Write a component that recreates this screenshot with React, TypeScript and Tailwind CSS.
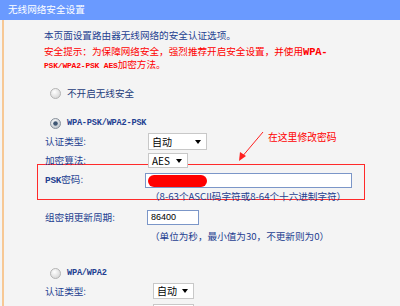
const cjk = { fontFamily: '"Noto Sans CJK SC", "Noto Sans", sans-serif' };

function Radio({ checked }: { checked?: boolean }) {
	return (
		<svg width="11" height="11" viewBox="0 0 11 11" className="shrink-0">
			<defs>
				<radialGradient id={checked ? "rOn" : "rOff"} cx="40%" cy="35%" r="70%">
					<stop offset="0%" stopColor="#ffffff" />
					<stop offset="100%" stopColor={checked ? "#b8c0c8" : "#d4d4d4"} />
				</radialGradient>
			</defs>
			<circle cx="5.5" cy="5.5" r="5" fill={`url(#${checked ? "rOn" : "rOff"})`} stroke={checked ? "#8a929c" : "#b4b4b4"} />
			{checked && <circle cx="5.5" cy="5.5" r="2.3" fill="#3e5673" />}
		</svg>
	);
}

function Select({ value, w, h }: { value: string; w: string; h: string }) {
	return (
		<div className={`relative z-10 flex items-center justify-between bg-white border border-[#c8c8c8] pl-[3px] pr-[5px] ${w} ${h}`}>
			<span className="text-[10px] text-black leading-none">{value}</span>
			<span className="w-0 h-0 border-l-[3px] border-r-[3px] border-t-[4px] border-l-transparent border-r-transparent border-t-black" />
		</div>
	);
}

const Mono = ({ children, size = "text-[8.6px]" }: { children: React.ReactNode; size?: string }) => (
	<span className={`${size} font-bold tracking-[-0.2px]`} style={{ fontFamily: '"Liberation Mono", monospace' }}>
		{children}
	</span>
);

export default function App() {
	return (
		<div className="w-[400px] h-[306px] bg-[#f4f4f4] overflow-hidden" style={cjk}>
			<div className="h-[20px] bg-[#6a9aff] flex items-center pl-[8px]">
				<span className="text-white text-[9.6px] leading-none">无线网络安全设置</span>
			</div>

			<div className="relative ml-[2px] h-[286px] border-l-2 border-[#f7c895] pl-[40px] text-[9.6px] text-[#1e3f91]">
				<div className="pt-[9px] leading-[12px]">本页面设置路由器无线网络的安全认证选项。</div>
				<div className="mt-[4px] leading-[12px] text-[#ff0000]">
					<div>安全提示：为保障网络安全，强烈推荐开启安全设置，并使用<Mono size="text-[10.5px]">WPA-</Mono></div>
					<div><Mono size="text-[8px]">PSK/WPA2-PSK AES</Mono>加密方法。</div>
				</div>

				<div className="mt-[15px] h-[12px] flex items-center pl-[6px] gap-[6px]">
					<Radio />
					<span className="text-[#233b7a]">不开启无线安全</span>
				</div>

				<div className="mt-[18px] h-[12px] flex items-center pl-[6px] gap-[6px]">
					<Radio checked />
					<Mono>WPA-PSK/WPA2-PSK</Mono>
				</div>

				<div className="mt-[4px] h-[17px] flex items-center">
					<span className="w-[104px] pl-[1px]">认证类型:</span>
					<Select value="自动" w="w-[59px]" h="h-[17px]" />
				</div>
				<div className="mt-[3px] h-[15px] flex items-center">
					<span className="w-[104px] pl-[1px]">加密算法:</span>
					<Select value="AES" w="w-[40px]" h="h-[15px]" />
				</div>

				<div className="-mt-[4px] -ml-[7px] w-[328px] h-[36px] border border-[#ff2a2a] pl-[7px]">
					<div className="mt-[8px] h-[15px] flex items-center">
						<span className="w-[100px]">
							<Mono size="text-[9.4px]">PSK</Mono>密码:
						</span>
						<div className="w-[207px] h-[15px] bg-white border border-[#7b96c8] flex items-center pl-[2px]">
							<div className="w-[59px] h-[12px] rounded-full bg-[#ff0000]" />
						</div>
					</div>
					<div className="mt-[2px] ml-[105px] leading-[12px] whitespace-nowrap">（8-63个ASCII码字符或8-64个十六进制字符）</div>
				</div>

				<div className="mt-[10px] h-[15px] flex items-center">
					<span className="w-[103px] pl-[1px]">组密钥更新周期:</span>
					<div className="w-[52px] h-[15px] bg-white border border-[#7b96c8] flex items-center pl-[3px]">
						<span className="text-[9px] text-black" style={{ fontFamily: '"Liberation Sans", sans-serif' }}>86400</span>
					</div>
				</div>
				<div className="mt-[5px] ml-[106px] leading-[12px] whitespace-nowrap">（单位为秒，最小值为30，不更新则为0）</div>

				<div className="mt-[25px] h-[12px] flex items-center pl-[6px] gap-[6px]">
					<Radio />
					<Mono>WPA/WPA2</Mono>
				</div>
				<div className="mt-[4px] h-[16px] flex items-center">
					<span className="w-[109px] pl-[1px]">认证类型:</span>
					<Select value="自动" w="w-[41px]" h="h-[16px]" />
				</div>
				<div className="mt-[5px] h-[16px] flex items-center">
					<span className="w-[109px]" />
					<div className="w-[41px] h-[16px] bg-white border border-[#c8c8c8]" />
				</div>

				{/* annotation */}
				<svg className="absolute left-[-4px] top-[-20px]" width="400" height="306">
					<line x1="263" y1="132" x2="241" y2="158" stroke="#ff2020" strokeWidth="1" />
					<polygon points="239,161 240,152 246,156" fill="#ff2020" />
				</svg>
				<div className="absolute left-[264px] top-[111px] text-[#ff0000] text-[9.8px] leading-[12px] whitespace-nowrap">在这里修改密码</div>
			</div>
		</div>
	);
}
